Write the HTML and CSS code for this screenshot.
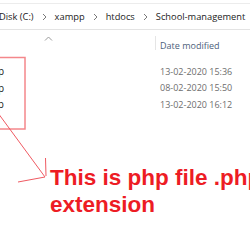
FILE: index.html
```html
<!DOCTYPE html>
<html lang="en">
<head>
  <meta charset="UTF-8" />
  <title>School-management</title>
  <link rel="stylesheet" href="styles.css">
</head>
<body>

  <div class="explorer">
    <div class="address">
      <span class="crumb">Disk (C:)</span>
      <svg class="chev" width="5" height="8" viewBox="0 0 5 8"><path d="M1 1 L4 4 L1 7" /></svg>
      <span class="crumb">xampp</span>
      <svg class="chev" width="5" height="8" viewBox="0 0 5 8"><path d="M1 1 L4 4 L1 7" /></svg>
      <span class="crumb">htdocs</span>
      <svg class="chev" width="5" height="8" viewBox="0 0 5 8"><path d="M1 1 L4 4 L1 7" /></svg>
      <span class="crumb">School-management</span>
    </div>

    <div class="header">
      <div class="col-name">
        <svg class="sort" width="9" height="5" viewBox="0 0 9 5"><path d="M1 4.5 L4.5 1 L8 4.5" /></svg>
      </div>
      <div class="col-date">Date modified</div>
    </div>

    <div class="files">
      <div class="row"><span class="name">index.php</span><span class="date">13-02-2020 15:36</span></div>
      <div class="row"><span class="name">login.php</span><span class="date">08-02-2020 15:50</span></div>
      <div class="row"><span class="name">admin.php</span><span class="date">13-02-2020 16:12</span></div>
    </div>
  </div>

  <p class="note">This is php file .php<br>extension</p>

  <!-- annotation drawn on top of the screenshot -->
  <svg class="markup" width="250" height="250" viewBox="0 0 250 250">
    <rect x="-6" y="57.5" width="31" height="71.5" />
    <path d="M-2 113 L45 177 L18 182" />
    <path d="M45.5 158 L46 176" />
  </svg>

</body>
</html>
```

FILE: styles.css
```css
body {
  margin: 0;
  padding-top: 3px;
  background: #ffffff;
  font-family: 'Open Sans', sans-serif;
  width: 250px;
  height: 250px;
  overflow: hidden;
  position: relative;
}

.address {
  display: flex;
  align-items: center;
  gap: 8px;
  height: 25px;
  border-top: 1px solid #ececec;
  border-bottom: 1px solid #e3e3e3;
  margin-left: -1px;
  font-size: 9.3px;
  color: #1b1b1b;
  white-space: nowrap;
}

.chev path {
  fill: none;
  stroke: #7a7a7a;
  stroke-width: 1;
}

.header {
  display: flex;
  height: 33px;
}

.col-name {
  width: 155px;
  border-right: 1px solid #e5e5e5;
  margin: 6px 0 13px;
  position: relative;
}

.sort {
  position: absolute;
  left: 44px;
  top: 0;
}

.sort path {
  fill: none;
  stroke: #9a9a9a;
  stroke-width: 1;
}

.col-date {
  padding: 9px 0 0 4px;
  font-size: 9px;
  color: #4c607a;
}

.files {
  margin-left: -60px;
}

.row {
  display: flex;
  height: 16.5px;
  align-items: center;
  font-size: 9px;
}

.name {
  width: 64px;
  flex-shrink: 0;
  text-align: right;
  color: #1a1a1a;
  font-size: 10px;
}

.date {
  margin-left: 156px;
  color: #6d6d6d;
}

.note {
  margin: 51px 0 0 50px;
  font-family: 'Liberation Sans', Arial, sans-serif;
  font-weight: bold;
  font-size: 22.5px;
  line-height: 27px;
  color: #ed1c24;
  white-space: nowrap;
}

.markup {
  position: absolute;
  left: 0;
  top: 0;
}

.markup rect {
  fill: none;
  stroke: #f4878b;
  stroke-width: 1.5;
}

.markup path {
  fill: none;
  stroke: #ef5a62;
  stroke-width: 1;
}
```
